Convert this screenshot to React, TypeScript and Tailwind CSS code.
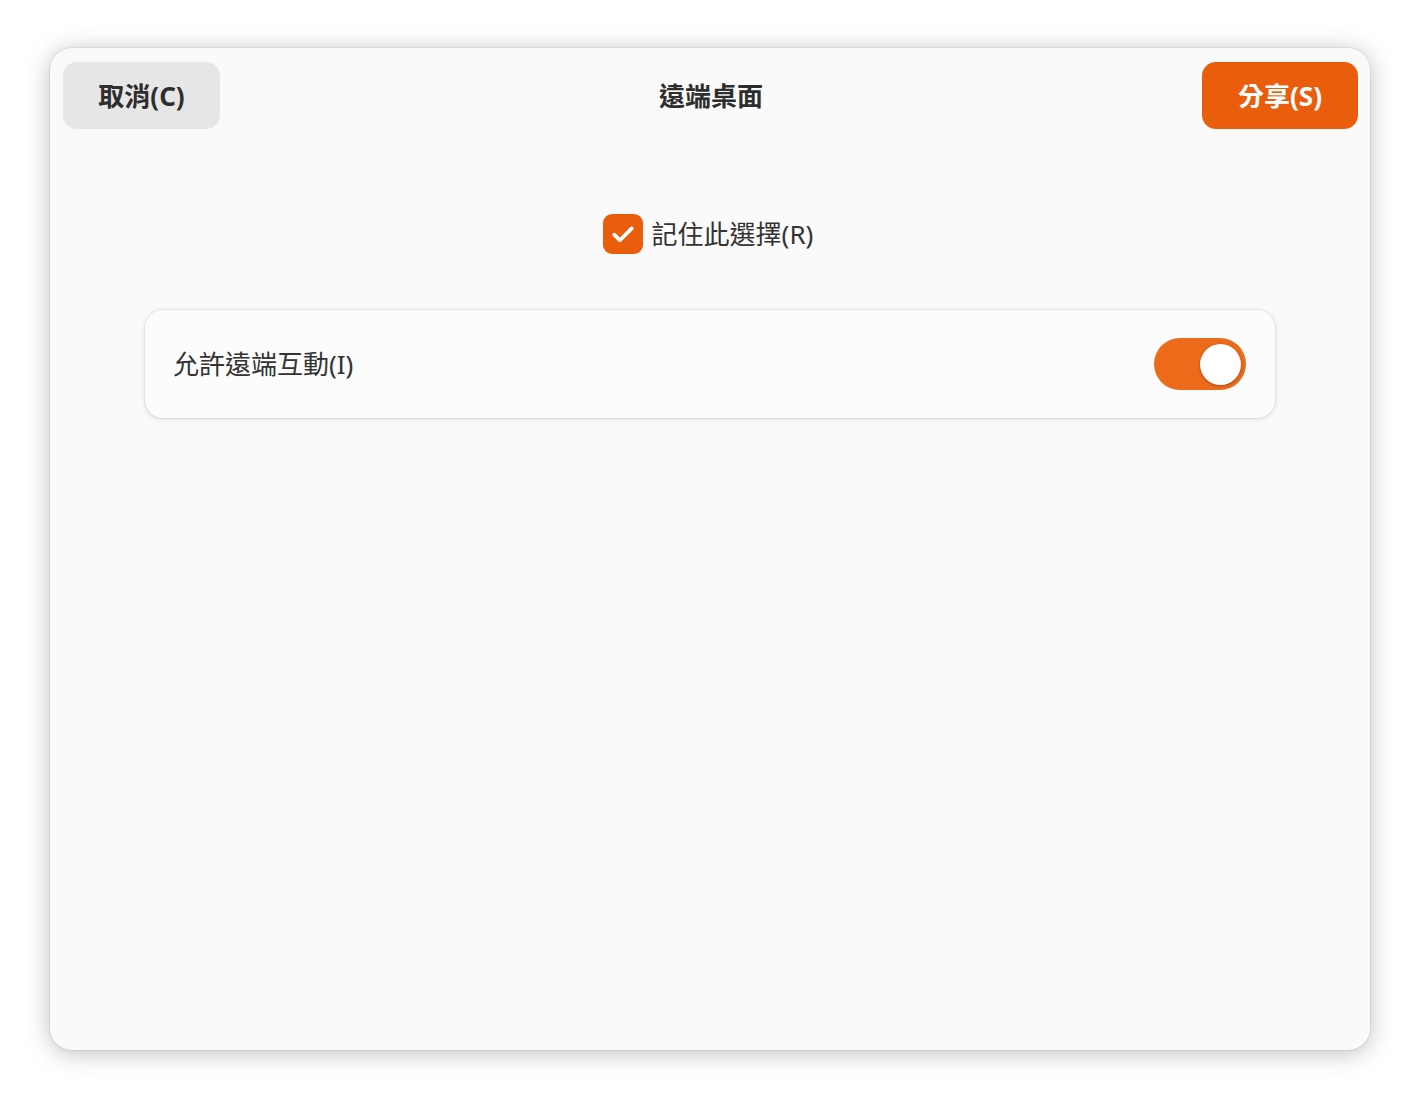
import React from "react";

export default function App() {
  const font = { fontFamily: '"Noto Sans", "Noto Sans CJK TC", sans-serif' };
  return (
    <div className="w-[1420px] h-[1100px] bg-white pt-[48px] pl-[50px]" style={font}>
      <div className="w-[1320px] h-[1002px] bg-[#fafafa] rounded-[22px] shadow-[0_3px_24px_rgba(0,0,0,0.26),0_0_0_1px_rgba(0,0,0,0.06)] flex flex-col">
        <div className="flex items-center justify-between pt-[14px] pl-[13px] pr-[12px]">
          <button className="w-[157px] h-[67px] rounded-[14px] bg-[#e6e6e6] text-[#2e2e2e] text-[26px] font-bold leading-none">
            取消(C)
          </button>
          <div className="text-[26px] font-bold text-[#2e2e2e] leading-none">遠端桌面</div>
          <button className="w-[156px] h-[67px] rounded-[14px] bg-[#e95d0c] text-white text-[26px] font-bold leading-none">
            分享(S)
          </button>
        </div>
        <div className="flex justify-center mt-[85px]">
          <div className="flex items-center gap-[9px] mr-[4px]">
            <div className="w-[40px] h-[40px] rounded-[9px] bg-[#e95d0c] flex items-center justify-center">
              <svg width="30" height="30" viewBox="0 0 24 24" fill="none">
                <path d="M5 12.5l4.5 4.5L19 7.5" stroke="white" strokeWidth="3" strokeLinecap="round" strokeLinejoin="round" />
              </svg>
            </div>
            <span className="text-[26px] text-[#333] leading-none">記住此選擇(R)</span>
          </div>
        </div>
        <div className="mx-[95px] mt-[56px] h-[108px] rounded-[18px] bg-[#fcfcfc] shadow-[0_1px_5px_rgba(0,0,0,0.14),0_0_0_1px_rgba(0,0,0,0.04)] flex items-center justify-between pl-[28px] pr-[29px]">
          <span className="text-[26px] text-[#333] leading-none">允許遠端互動(I)</span>
          <div className="w-[92px] h-[52px] rounded-full bg-[#ec6a1a] flex items-center justify-end pr-[5px]">
            <div className="w-[41px] h-[41px] rounded-full bg-white shadow-[0_1px_3px_rgba(0,0,0,0.3)]" />
          </div>
        </div>
      </div>
    </div>
  );
}
